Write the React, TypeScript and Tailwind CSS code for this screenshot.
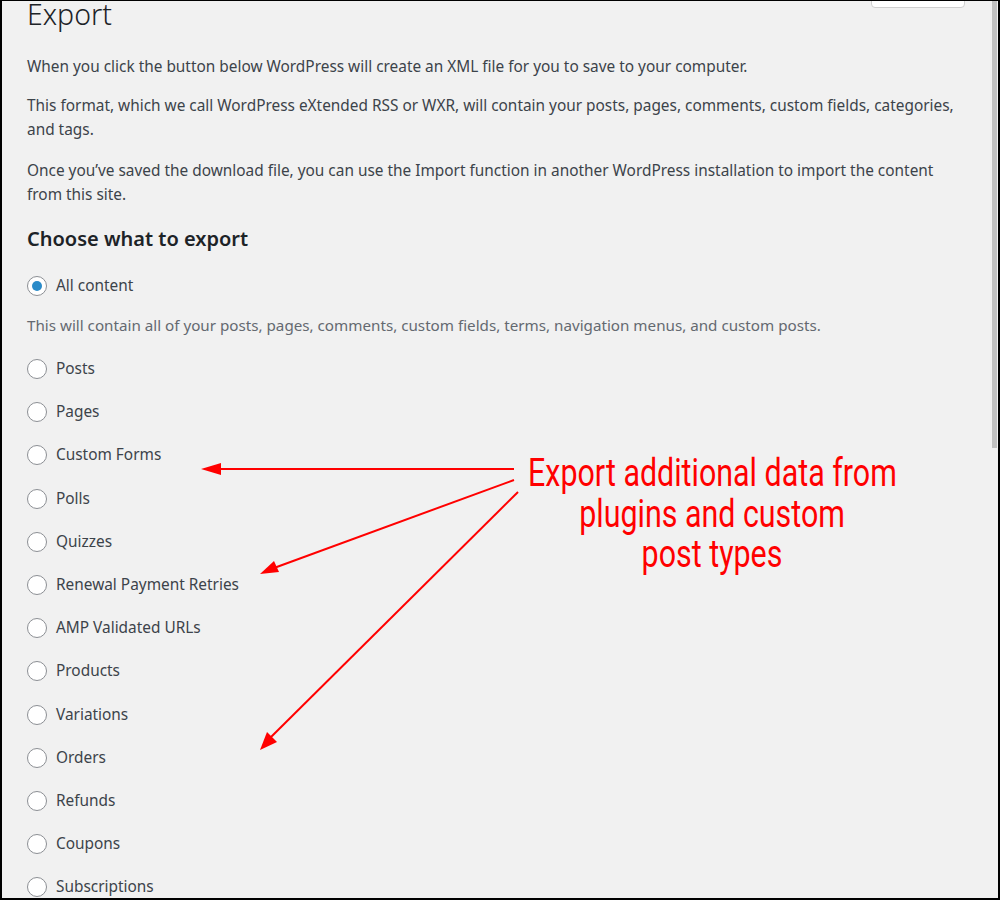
import React from "react";

const items = [
  "Posts",
  "Pages",
  "Custom Forms",
  "Polls",
  "Quizzes",
  "Renewal Payment Retries",
  "AMP Validated URLs",
  "Products",
  "Variations",
  "Orders",
  "Refunds",
  "Coupons",
  "Subscriptions",
];

function Radio({ checked }: { checked?: boolean }) {
  return (
    <span className="flex h-[20px] w-[20px] shrink-0 items-center justify-center rounded-full border border-[#8c8f94] bg-white">
      {checked && <span className="h-[10px] w-[10px] rounded-full bg-[#2a8bc9]" />}
    </span>
  );
}

export default function App() {
  return (
    <div
      className="relative h-[900px] w-[1000px] overflow-hidden border-x-2 border-b-2 border-t border-black bg-[#f1f1f1] text-[#3c434a]"
      style={{ fontFamily: '"Noto Sans", "Open Sans", sans-serif' }}
    >
      <div className="absolute right-[33px] top-[-4px] h-[11px] w-[94px] rounded-b-[4px] border border-[#cfcfcf] bg-white" />
      <div className="absolute right-[1px] top-0 h-[447px] w-[5px] bg-[#c1c1c1]" />

      <div className="pl-[25px]">
        <h1 className="mt-[-7px] text-[28.5px] font-light leading-[40px] text-[#1d2327]">Export</h1>
        <div className="mt-[21px] w-[942px] text-[15.4px] leading-[24px]">
          <p>When you click the button below WordPress will create an XML file for you to save to your computer.</p>
          <p className="mt-[15px]">
            This format, which we call WordPress eXtended RSS or WXR, will contain your posts, pages, comments, custom fields, categories, and tags.
          </p>
          <p className="mt-[17px]">
            Once you’ve saved the download file, you can use the Import function in another WordPress installation to import the content from this site.
          </p>
        </div>
        <h2 className="mt-[17px] text-[20px] font-semibold leading-[30px] text-[#1d2327]">Choose what to export</h2>
        <div className="mt-[22px] flex items-center gap-[9px] text-[15.4px] leading-[20px]">
          <Radio checked />
          <span>All content</span>
        </div>
        <p className="mt-[19px] text-[15.2px] leading-[20px] text-[#646970]">
          This will contain all of your posts, pages, comments, custom fields, terms, navigation menus, and custom posts.
        </p>
        <div className="mt-[24px] flex flex-col gap-[23.2px] text-[15.4px] leading-[20px]">
          {items.map((it) => (
            <div key={it} className="flex items-center gap-[9px]">
              <Radio />
              <span>{it}</span>
            </div>
          ))}
        </div>
      </div>

      <svg className="pointer-events-none absolute left-0 top-0" width="1000" height="900">
        <g stroke="#ff0000" strokeWidth="2" fill="none">
          <line x1="512" y1="468" x2="215" y2="468" />
          <line x1="512" y1="479" x2="272" y2="567" />
          <line x1="516" y1="491" x2="268" y2="737" />
        </g>
        <g fill="#ff0000">
          <polygon points="199,468 219,462 219,474" />
          <polygon points="258,573 272,560 277,571" />
          <polygon points="258,749 265,731 275,741" />
        </g>
      </svg>

      <div
        className="absolute left-[460px] top-[452px] flex w-[500px] flex-col items-center text-[38px] leading-[40.5px] text-[#ff0000]"
        style={{ fontFamily: 'Roboto, "Liberation Sans", sans-serif' }}
      >
        <div className="scale-x-[0.8] whitespace-nowrap">Export additional data from</div>
        <div className="scale-x-[0.8] whitespace-nowrap">plugins and custom</div>
        <div className="scale-x-[0.8] whitespace-nowrap">post types</div>
      </div>
    </div>
  );
}
